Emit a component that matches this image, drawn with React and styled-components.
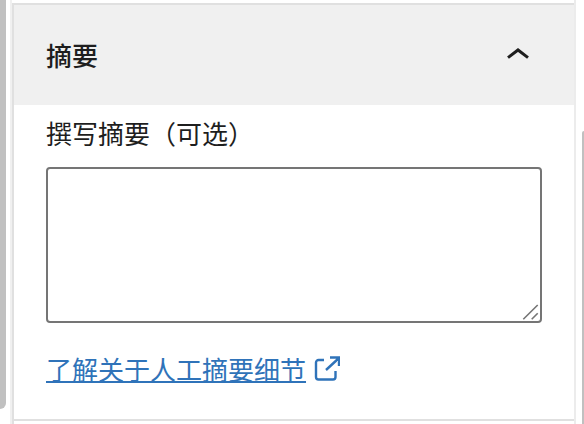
import React from "react";
import styled, { createGlobalStyle } from "styled-components";

const Global = createGlobalStyle`
  html, body { margin: 0; padding: 0; background: #fff; }
  body { font-family: "Noto Sans CJK SC", "Liberation Sans", sans-serif; overflow: hidden; }
`;

const Page = styled.div`
  width: 584px;
  height: 424px;
  display: flex;
  overflow: hidden;
  background: #fff;
`;

const LeftGutter = styled.div`
  width: 10px;
  flex: none;
  height: 424px;
`;

const LeftThumb = styled.div`
  width: 6px;
  height: 409px;
  background: #c0c0c0;
  border-bottom-right-radius: 6px;
`;

const Panel = styled.section`
  width: 566px;
  flex: none;
  height: 424px;
  padding-top: 3px;
  box-sizing: border-box;
  border-left: 2px solid #f0f0f0;
  border-right: 2px solid #ececec;
`;

const Column = styled.div`
  height: 100%;
  border-left: 2px solid #e0e0e0;
`;

const Section = styled.div`
  border-top: 2px solid #e0e0e0;
  border-bottom: 2px solid #e0e0e0;
  height: 418px;
  box-sizing: border-box;
`;

const Header = styled.div`
  height: 100px;
  background: #f0f0f0;
  display: flex;
  align-items: center;
  justify-content: space-between;
  padding: 0 44px 0 32px;
  color: #1e1e1e;
`;

const Title = styled.h2`
  margin: 0;
  font-size: 26px;
  line-height: 36px;
  font-weight: 500;
`;

const Body = styled.div`
  padding: 9px 32px 0;
  display: flex;
  flex-direction: column;
`;

const Label = styled.label`
  font-size: 26px;
  line-height: 38px;
  color: #1e1e1e;
  margin-bottom: 15px;
`;

const AreaWrap = styled.div`
  position: relative;
  width: 496px;
  height: 156px;
`;

const Area = styled.textarea`
  display: block;
  width: 100%;
  height: 100%;
  box-sizing: border-box;
  border: 2px solid #757575;
  border-radius: 4px;
  background: #fff;
  margin: 0;
  outline: none;
  resize: none;
`;

const ResizeGrip = styled.svg`
  position: absolute;
  right: 0;
  bottom: 0;
  pointer-events: none;
`;

const LinkRow = styled.div`
  margin-top: 27px;
  display: flex;
  align-items: center;
  gap: 8px;
  font-size: 26px;
  line-height: 38px;
  color: #2f73b9;
`;

const DocLink = styled.a`
  color: #2f73b9;
  text-decoration: underline;
  text-decoration-thickness: 2px;
  text-underline-offset: 1px;
`;

const RightGutter = styled.div`
  flex: 1;
  display: flex;
  justify-content: flex-end;
  padding-top: 131px;
`;

const RightThumb = styled.div`
  width: 2px;
  height: 293px;
  background: #c0c0c0;
  border-top-left-radius: 3px;
`;

export default function App() {
  return (
    <Page>
      <Global />
      <LeftGutter>
        <LeftThumb />
      </LeftGutter>
      <Panel>
        <Column>
          <Section>
            <Header>
              <Title>摘要</Title>
              <svg width="24" height="24" viewBox="0 0 24 24" fill="none">
                <path d="M2 14.6 12 7l10 7.6" stroke="#1e1e1e" strokeWidth="3" />
              </svg>
            </Header>
            <Body>
              <Label htmlFor="summary">撰写摘要（可选）</Label>
              <AreaWrap>
                <Area id="summary" />
                <ResizeGrip width="24" height="24" viewBox="0 0 24 24" fill="none" stroke="#757575" strokeWidth="1.6">
                  <path d="M19.700 6 5.300 20.300M19.700 14.300l-6 6" />
                </ResizeGrip>
              </AreaWrap>
              <LinkRow>
                <DocLink href="#">了解关于人工摘要细节</DocLink>
                <svg width="26" height="28" viewBox="0 0 26 28" fill="none" stroke="#2f73b9" strokeWidth="2.4">
                  <path d="M10 5H4.500A2.500 2.500 0 0 0 2 7.500V22a2.500 2.500 0 0 0 2.500 2.500H19a2.500 2.500 0 0 0 2.500-2.500v-6" />
                  <path d="M12 15 25 3M16 2.500h9V11" />
                </svg>
              </LinkRow>
            </Body>
          </Section>
        </Column>
      </Panel>
      <RightGutter>
        <RightThumb />
      </RightGutter>
    </Page>
  );
}
